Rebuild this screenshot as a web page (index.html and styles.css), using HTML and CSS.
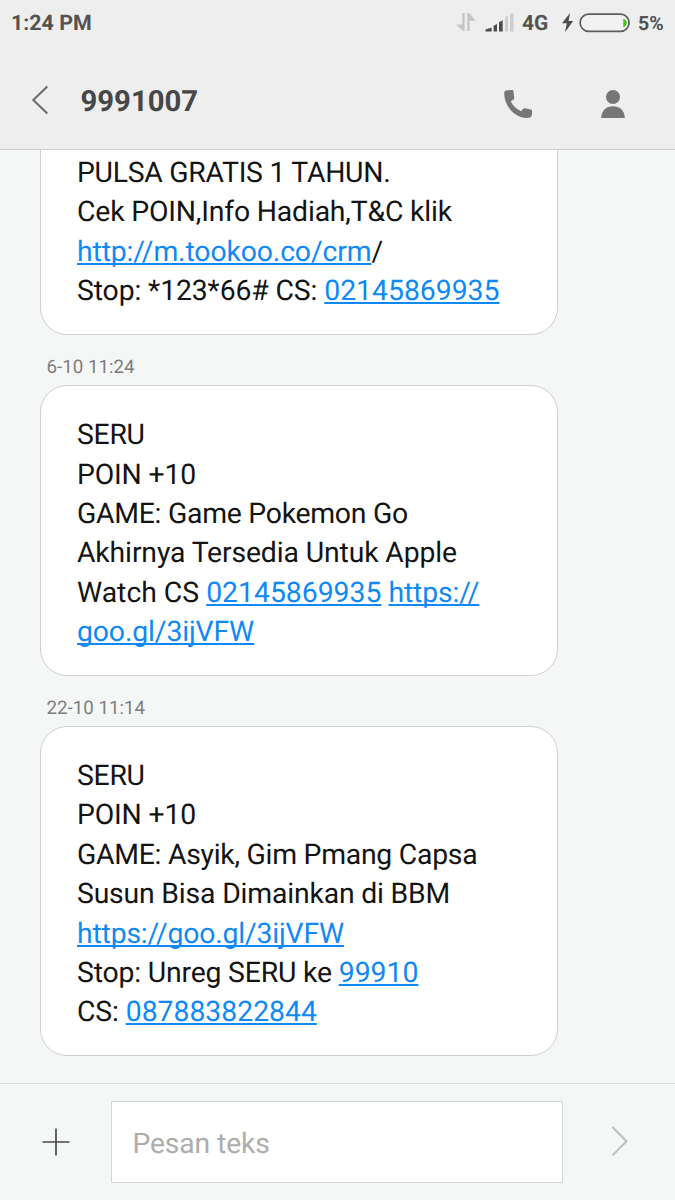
FILE: index.html
```html
<!DOCTYPE html>
<html lang="id">
<head>
<meta charset="utf-8">
<title>9991007</title>
<link rel="stylesheet" href="styles.css">
</head>
<body>
<div class="screen">
  <header class="top">
    <div class="status">
      <span class="clock">1:24 PM</span>
      <svg class="status-icons" width="60" height="24" viewBox="0 0 60 24">
        <path d="M6.3 2H8.6V20H7.2L0 13.5H6.3ZM11.3 2H13L19.8 9.7H13.6V20H11.3Z" fill="#c5c5c5"/>
        <path d="M29.5 20.4V18.6L35.6 16.4V20.4ZM37.6 20.4V14.8L41 13V20.4ZM43 20.4V11.3L46.7 9.3V20.4Z" fill="#4d4d4d"/>
        <path d="M49 20.4V6L52 4.5V20.4ZM54 20.4V3L57.5 2V20.4Z" fill="#cecece"/>
      </svg>
      <span class="network">4G</span>
      <svg class="battery" width="70" height="24" viewBox="0 0 70 24">
        <path d="M8 1L0 11.2H4.8L3 20.2L11.2 9H6.6Z" fill="#4d4d4d"/>
        <rect x="18.1" y="2.2" width="49" height="17.2" rx="8.6" fill="#f1f1f1" stroke="#5c5c5c" stroke-width="1.7"/>
        <path d="M61.3 6.8C65.8 8 65.8 14 61.3 15.2Z" fill="#39c60b"/>
      </svg>
      <span class="percent">5%</span>
    </div>
    <div class="bar">
      <svg class="back" width="18" height="30" viewBox="0 0 18 30"><path d="M16.3 1.5L2.3 15L16.3 28.5" fill="none" stroke="#6a6a6a" stroke-width="2"/></svg>
      <h1 class="title">9991007</h1>
      <svg class="call" width="28" height="28" viewBox="0 0 28 28"><path d="M1.6 .5L8.2 0Q9.2 0 9.4 1L10.3 8.2Q10.3 9.1 9.6 9.6L6.8 11.6Q10 18 17.2 21.3L19.2 18.8Q19.8 18.1 20.7 18.3L27 19.4Q28 19.7 28 20.6V24.5Q27.5 28 23.5 28C12 28.2 0 17 .2 3Q.2 1 1.6 .5Z" fill="#767676"/></svg>
      <svg class="person" width="24" height="28" viewBox="0 0 24 28"><circle cx="12" cy="7" r="7" fill="#767676"/><path d="M.3 28V26.5C1 20 5.5 16.2 12 16.2S23 20 23.7 26.5V28Z" fill="#767676"/></svg>
    </div>
  </header>
  <main class="thread">
    <article class="bubble bubble-first">
      <div class="tighter">PULSA GRATIS 1 TAHUN.</div>
      <div class="tight">Cek POIN,Info Hadiah,T&amp;C klik</div>
      <div class="snug"><a>http://m.tookoo.co/crm</a>/</div>
      <div><span class="snug">Stop: *123*66# CS: </span><a>02145869935</a></div>
    </article>
    <time class="stamp">6-10 11:24</time>
    <article class="bubble">
      <div class="tighter">SERU</div>
      <div class="tight">POIN +10</div>
      <div class="tighter">GAME: Game Pokemon Go</div>
      <div class="snug">Akhirnya Tersedia Untuk Apple</div>
      <div>Watch CS <a>02145869935</a> <a class="snug">https://</a></div>
      <div class="snug"><a>goo.gl/3ijVFW</a></div>
    </article>
    <time class="stamp">22-10 11:14</time>
    <article class="bubble">
      <div class="tighter">SERU</div>
      <div class="tight">POIN +10</div>
      <div class="tighter">GAME: Asyik, Gim Pmang Capsa</div>
      <div class="tight">Susun Bisa Dimainkan di BBM</div>
      <div class="tight"><a>https://goo.gl/3ijVFW</a></div>
      <div><span class="tight">Stop: Unreg SERU ke </span><a>99910</a></div>
      <div><span class="snug">CS: </span><a>087883822844</a></div>
    </article>
  </main>
  <footer class="composer">
    <svg class="plus" width="28" height="28" viewBox="0 0 28 28"><path d="M0.5 14H27.5M14 .5V27.5" stroke="#4a4a4a" stroke-width="1.7"/></svg>
    <div class="field snug">Pesan teks</div>
    <svg class="send" width="18" height="32" viewBox="0 0 18 32"><path d="M1.5 1L15.5 15.2L1.5 29.4" fill="none" stroke="#bdbebe" stroke-width="2"/></svg>
  </footer>
</div>
</body>
</html>
```
FILE: styles.css
```css
* { box-sizing: border-box; }
body {
  margin: 0;
  font-family: Roboto, "Liberation Sans", sans-serif;
  text-rendering: geometricPrecision;
  background: #f5f7f7;
}
svg { display: block; flex: none; }
.snug { letter-spacing: -0.12px; }
.tight { letter-spacing: -0.17px; }
.tighter { letter-spacing: -0.26px; }
.screen {
  display: flex;
  flex-direction: column;
  width: 675px;
  height: 1200px;
  overflow: hidden;
}
.top {
  flex: none;
  height: 150px;
  background: #eeeeee;
  border-bottom: 1px solid #cdcfcf;
}
.status {
  display: flex;
  align-items: center;
  height: 48px;
  padding: 0 12px 2px 11px;
  font-weight: 700;
  font-size: 21.4px;
  color: #535353;
}
.clock { flex: 1; padding-top: 1px; white-space: nowrap; }
.status-icons { margin-right: 6px; }
.network { width: 28px; padding-top: 2px; font-size: 21px; }
.battery { margin: 2px 6px 0 12px; }
.percent { font-size: 19.6px; width: 25px; padding-top: 1px; }
.bar {
  display: flex;
  align-items: center;
  height: 101px;
  padding: 0 50px 0 31px;
}
.back { margin-top: 3px; }
.title {
  flex: 1;
  margin: 7px 0 0 31.5px;
  font-size: 29.3px;
  line-height: 36px;
  font-weight: 700;
  color: #474747;
}
.call { margin: 11px 69px 0 0; }
.person { margin-top: 11px; }
.thread {
  flex: none;
  display: flex;
  flex-direction: column;
  height: 933px;
  padding-left: 40px;
}
.bubble {
  flex: none;
  width: 518px;
  padding: 28.8px 30px 23px 36px;
  border: 1px solid #cdd0d0;
  border-radius: 27px;
  background: #fff;
  color: #141414;
  font-size: 28.35px;
  line-height: 39.42px;
  white-space: nowrap;
}
.bubble-first {
  height: 185px;
  padding-top: 2.8px;
  border-top: 0;
  border-radius: 0 0 27px 27px;
}
.bubble a {
  color: #1189f5;
  text-decoration: underline;
  text-decoration-thickness: 2px;
  text-underline-offset: 2px;
  text-decoration-skip-ink: none;
}
.stamp {
  flex: none;
  height: 50.4px;
  padding: 7px 0 0 6.6px;
  font-size: 18.7px;
  line-height: 51px;
  color: #7c7e7e;
}
.composer {
  flex: none;
  display: flex;
  align-items: center;
  height: 117px;
  padding: 0 46px 1px 42px;
  border-top: 1px solid #d9dcdc;
}
.field {
  flex: none;
  width: 452px;
  height: 82px;
  margin: 0 48px 0 41.4px;
  padding: 2px 20px 0;
  border: 1px solid #d3d6d6;
  background: #fff;
  color: #adadad;
  font-size: 28.3px;
  line-height: 80px;
}
```
